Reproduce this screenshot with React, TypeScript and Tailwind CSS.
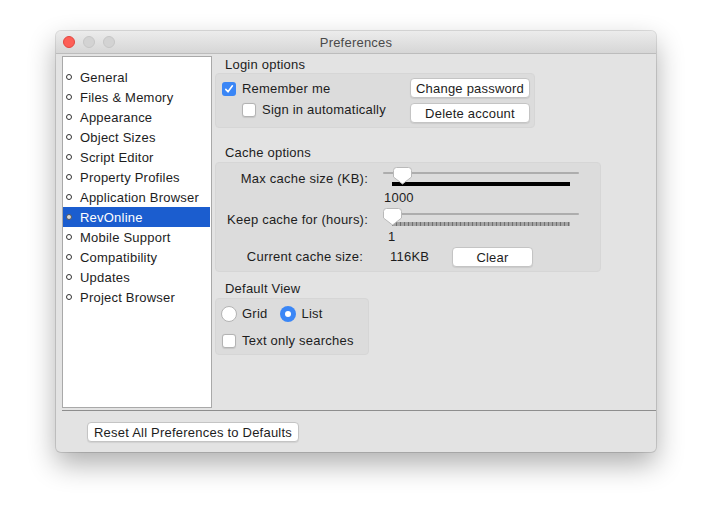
import React from "react";

const ITEMS = [
  "General",
  "Files & Memory",
  "Appearance",
  "Object Sizes",
  "Script Editor",
  "Property Profiles",
  "Application Browser",
  "RevOnline",
  "Mobile Support",
  "Compatibility",
  "Updates",
  "Project Browser",
];

function Checkbox({ checked }: { checked?: boolean }) {
  if (checked) {
    return (
      <span className="flex h-[14px] w-[14px] shrink-0 items-center justify-center rounded-[3px] bg-[#3a86f6]">
        <svg width="10" height="10" viewBox="0 0 10 10">
          <path d="M1.8 5.4 L4 7.8 L8.4 1.8" fill="none" stroke="white" strokeWidth="1.6" strokeLinecap="round" strokeLinejoin="round" />
        </svg>
      </span>
    );
  }
  return <span className="h-[14px] w-[14px] shrink-0 rounded-[3px] border border-[#b3b3b3] bg-white shadow-[0_0.5px_1px_rgba(0,0,0,0.1)]" />;
}

function Radio({ checked }: { checked?: boolean }) {
  if (checked) {
    return (
      <span className="flex h-4 w-4 shrink-0 items-center justify-center rounded-full bg-[#3a86f6]">
        <span className="h-[6px] w-[6px] rounded-full bg-white" />
      </span>
    );
  }
  return <span className="h-4 w-4 shrink-0 rounded-full border border-[#b3b3b3] bg-white" />;
}

function Button({ children, className = "" }: { children: React.ReactNode; className?: string }) {
  return (
    <button
      className={`flex h-5 items-center justify-center rounded-[4px] border border-[#c4c4c4] bg-white text-[13px] leading-none text-[#1d1d1d] shadow-[0_1px_1px_rgba(0,0,0,0.08)] ${className}`}
    >
      {children}
    </button>
  );
}

function Thumb() {
  return (
    <svg width="19" height="18" viewBox="0 0 19 18" className="absolute top-[1px]">
      <path
        d="M3.5 0.5 H15.5 A3 3 0 0 1 18.5 3.5 V10 L9.5 17 L0.5 10 V3.5 A3 3 0 0 1 3.5 0.5 Z"
        fill="white"
        stroke="#b9b9b9"
      />
    </svg>
  );
}

function Slider({ thumbLeft, ticks }: { thumbLeft: number; ticks?: boolean }) {
  return (
    <div className="relative h-[22px] w-[196px]">
      <div className="absolute left-0 right-0 top-[6px] h-[2px] rounded-full bg-[#adadad]" />
      {ticks ? (
        <div className="absolute left-[9px] top-[15px] h-[4px] w-[178px] bg-[repeating-linear-gradient(90deg,#6f6f6f_0,#6f6f6f_1px,#a4a4a4_1px,#a4a4a4_4px)]" />
      ) : (
        <div className="absolute left-[9px] top-[16px] h-[4px] w-[178px] bg-black" />
      )}
      <div className="absolute top-0" style={{ left: thumbLeft }}>
        <Thumb />
      </div>
    </div>
  );
}

export default function App() {
  return (
    <div className="h-[532px] w-[712px] overflow-hidden bg-white pl-[56px] pt-[31px] font-['Liberation_Sans',Arial,sans-serif] text-[13px] tracking-[0.22px] text-[#1d1d1d]">
      <div className="flex h-[421px] w-[600px] flex-col overflow-hidden rounded-[5px] bg-[#e3e3e3] shadow-[0_0_0_1px_rgba(0,0,0,0.12),0_12px_28px_rgba(0,0,0,0.32)]">
        {/* Title bar */}
        <div className="relative flex h-[23px] shrink-0 items-center gap-2 border-b border-[#bcbcbc] bg-gradient-to-b from-[#ececec] to-[#d6d6d6] pl-[7px]">
          <span className="h-3 w-3 rounded-full border border-[#e2463f] bg-[#fd5f57]" />
          <span className="h-3 w-3 rounded-full border border-[#c6c6c6] bg-[#d3d3d3]" />
          <span className="h-3 w-3 rounded-full border border-[#c6c6c6] bg-[#d3d3d3]" />
          <span className="absolute inset-x-0 pt-[1px] text-center text-[13px] text-[#4a4a4a]">Preferences</span>
        </div>

        <div className="flex pl-[6px] pt-[2px]">
          {/* Sidebar */}
          <ul className="h-[352px] w-[150px] shrink-0 border border-[#a9a9a9] bg-white pt-[10px]">
            {ITEMS.map((item) => {
              const selected = item === "RevOnline";
              return (
                <li
                  key={item}
                  className={`flex h-5 items-center pl-[3px] ${selected ? "mr-[1px] bg-[#1b5dcf] text-white" : ""}`}
                >
                  <span
                    className={`h-[6px] w-[6px] rounded-full border ${selected ? "border-[#555] bg-[#d8d8d8]" : "border-[#333] bg-white"}`}
                  />
                  <span className="ml-[8px] leading-none">{item}</span>
                </li>
              );
            })}
          </ul>

          {/* Content */}
          <div className="ml-[3px] flex flex-col pt-[1px]">
            <div className="pl-[10px] leading-4">Login options</div>
            <div className="flex h-[55px] w-[320px] justify-between rounded-[4px] border border-[#d6d6d6] bg-[#dcdcdc] pl-[6px] pr-[4px]">
              <div className="flex flex-col pt-[8px]">
                <div className="flex h-[14px] items-center gap-[6px]">
                  <Checkbox checked />
                  <span>Remember me</span>
                </div>
                <div className="mt-[7px] flex h-[14px] items-center gap-[6px] pl-[20px]">
                  <Checkbox />
                  <span>Sign in automatically</span>
                </div>
              </div>
              <div className="flex flex-col gap-[5px] pt-[4px]">
                <Button className="w-[120px]">Change password</Button>
                <Button className="w-[120px]">Delete account</Button>
              </div>
            </div>

            <div className="mt-[17px] pl-[10px] leading-4">Cache options</div>
            <div className="mt-[1px] flex h-[110px] w-[386px] flex-col rounded-[4px] border border-[#d6d6d6] bg-[#dcdcdc] pt-[3px]">
              <div className="flex h-[24px]">
                <span className="w-[152px] pt-[5px] text-right leading-4">Max cache size (KB):</span>
                <div className="ml-[15px]">
                  <Slider thumbLeft={10} />
                </div>
              </div>
              <div className="h-4 pl-[168px] leading-4">1000</div>
              <div className="mt-[1px] flex h-[22px]">
                <span className="w-[152px] pt-[5px] text-right leading-4">Keep cache for (hours):</span>
                <div className="ml-[15px]">
                  <Slider thumbLeft={0} ticks />
                </div>
              </div>
              <div className="h-4 pl-[172px] leading-4">1</div>
              <div className="mt-[2px] flex h-5 items-center">
                <span className="w-[147px] text-right">Current cache size:</span>
                <span className="ml-[27px] w-[62px]">116KB</span>
                <Button className="w-[81px]">Clear</Button>
              </div>
            </div>

            <div className="mt-[9px] pl-[10px] leading-4">Default View</div>
            <div className="mt-[1px] flex h-[57px] w-[154px] flex-col rounded-[4px] border border-[#d6d6d6] bg-[#dcdcdc] pl-[5px] pt-[7px]">
              <div className="flex h-4 items-center">
                <Radio />
                <span className="ml-[5px]">Grid</span>
                <span className="ml-[13px]">
                  <Radio checked />
                </span>
                <span className="ml-[5px]">List</span>
              </div>
              <div className="mt-[12px] flex h-[14px] items-center gap-[6px] pl-[1px]">
                <Checkbox />
                <span>Text only searches</span>
              </div>
            </div>
          </div>
        </div>

        <div className="ml-[6px] mt-[2px] h-px bg-[#8e8e8e]" />
        <div className="pl-[31px] pt-[11px]">
          <Button className="w-[212px]">Reset All Preferences to Defaults</Button>
        </div>
      </div>
    </div>
  );
}
